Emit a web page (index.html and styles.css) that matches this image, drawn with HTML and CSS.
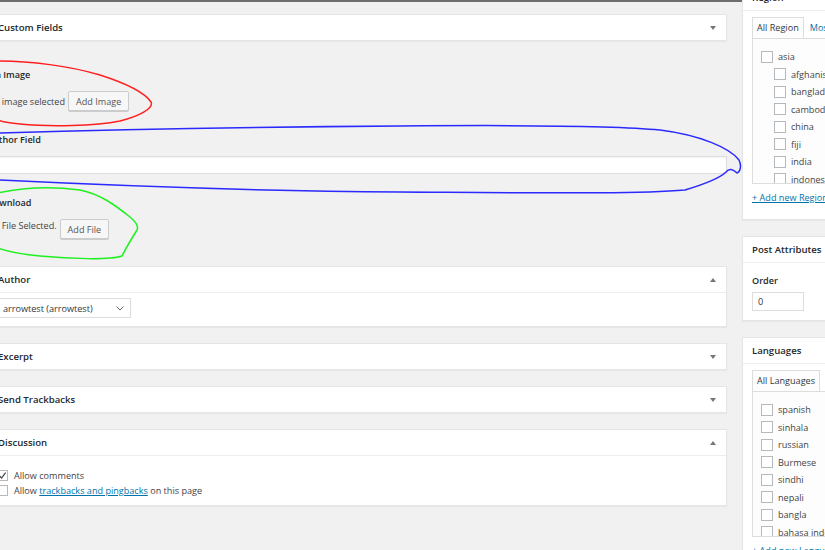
FILE: index.html
```html
<!DOCTYPE html>
<html lang="en">
<head>
<meta charset="utf-8">
<title>Edit Post</title>
<link rel="stylesheet" href="styles.css">
</head>
<body>
<div class="layout">
  <main class="main-col">
    <section class="cf">
      <header class="pb-head cf-head"><h2>Custom Fields</h2><span class="toggle down"></span></header>
      <div class="cf-body">
        <div class="field">
          <label class="field-label">Pin Image</label>
          <div class="field-row">
            <span>No image selected</span>
            <button class="btn">Add Image</button>
          </div>
        </div>
        <div class="field">
          <label class="field-label">Author Field</label>
          <div class="text-input"></div>
        </div>
        <div class="field">
          <label class="field-label">Download</label>
          <div class="field-row top">
            <span class="row-text">No File Selected.</span>
            <button class="btn">Add File</button>
          </div>
        </div>
      </div>
    </section>

    <section class="postbox">
      <header class="pb-head"><h2>Author</h2><span class="toggle up"></span></header>
      <div class="pb-body author-body">
        <div class="select">
          <span>arrowtest (arrowtest)</span>
          <svg class="chev" width="8" height="5" viewBox="0 0 8 5"><path d="M0.5 0.5 L4 4 L7.5 0.5" fill="none" stroke="#666" stroke-width="1"/></svg>
        </div>
      </div>
    </section>

    <section class="postbox">
      <header class="pb-head"><h2>Excerpt</h2><span class="toggle down"></span></header>
    </section>

    <section class="postbox">
      <header class="pb-head"><h2>Send Trackbacks</h2><span class="toggle down"></span></header>
    </section>

    <section class="postbox">
      <header class="pb-head"><h2>Discussion</h2><span class="toggle up"></span></header>
      <div class="pb-body disc-body">
        <div class="check-row">
          <span class="cb checked"><svg width="9" height="9" viewBox="0 0 9 9"><path d="M1.5 4.8 L3.6 7 L7.6 1.6" fill="none" stroke="#444" stroke-width="1.2"/></svg></span>
          <span>Allow comments</span>
        </div>
        <div class="check-row">
          <span class="cb"></span>
          <span>Allow <a href="#" class="link">trackbacks and pingbacks</a> on this page</span>
        </div>
      </div>
    </section>
  </main>

  <aside class="side-col">
    <section class="postbox side-box">
      <header class="pb-head"><h2>Region</h2></header>
      <div class="pb-body tax-body">
        <div class="tabs">
          <span class="tab active">All Region</span>
          <span class="tab">Most Used</span>
        </div>
        <div class="tab-panel">
          <ul class="terms">
            <li><span class="cb"></span>asia</li>
            <li class="child"><span class="cb"></span>afghanistan</li>
            <li class="child"><span class="cb"></span>bangladesh</li>
            <li class="child"><span class="cb"></span>cambodia</li>
            <li class="child"><span class="cb"></span>china</li>
            <li class="child"><span class="cb"></span>fiji</li>
            <li class="child"><span class="cb"></span>india</li>
            <li class="child"><span class="cb"></span>indonesia</li>
          </ul>
        </div>
        <a href="#" class="link add-new">+ Add new Region</a>
      </div>
    </section>

    <section class="postbox side-box">
      <header class="pb-head"><h2>Post Attributes</h2></header>
      <div class="pb-body attr-body">
        <div class="attr-label">Order</div>
        <div class="num-input">0</div>
      </div>
    </section>

    <section class="postbox side-box">
      <header class="pb-head"><h2>Languages</h2></header>
      <div class="pb-body tax-body">
        <div class="tabs">
          <span class="tab active">All Languages</span>
          <span class="tab">Most Used</span>
        </div>
        <div class="tab-panel">
          <ul class="terms">
            <li><span class="cb"></span>spanish</li>
            <li><span class="cb"></span>sinhala</li>
            <li><span class="cb"></span>russian</li>
            <li><span class="cb"></span>Burmese</li>
            <li><span class="cb"></span>sindhi</li>
            <li><span class="cb"></span>nepali</li>
            <li><span class="cb"></span>bangla</li>
            <li><span class="cb"></span>bahasa indonesia</li>
          </ul>
        </div>
        <a href="#" class="link add-new">+ Add new Language</a>
      </div>
    </section>
  </aside>
</div>

<svg class="annotations" width="825" height="550" viewBox="0 0 825 550">
  <path class="ann red" d="M -2 61 C 30 61, 70 66, 100 75 C 125 83, 145 93, 151 102 C 154 108, 140 116, 120 121 C 95 126, 50 127, 20 124 C 8 123, 0 121, -2 120"/>
  <path class="ann blue" d="M -2 133 C 100 130, 250 127, 400 126 C 520 125, 620 126, 660 130 C 700 135, 730 148, 739 160 C 742 166, 740 172, 737 173 C 733 169, 729 168, 726 172 C 720 178, 705 184, 685 190 C 640 194, 560 193, 400 192 C 250 191, 120 186, -2 180"/>
  <path class="ann green" d="M -2 193 C 20 188, 50 186, 80 190 C 100 194, 115 205, 130 217 C 136 222, 139 226, 137 230 C 132 238, 127 246, 122 256 C 110 260, 70 259, 40 256 C 20 254, 5 251, -2 248"/>
</svg>
</body>
</html>
```

FILE: styles.css
```css
* { box-sizing: border-box; }

html, body {
  margin: 0;
  height: 100%;
}

body {
  background: #f1f1f1;
  font-family: "Open Sans", "Noto Sans", sans-serif;
  font-size: 9.1px;
  color: #23282d;
  overflow: hidden;
  position: relative;
}

.layout {
  display: flex;
  gap: 15px;
  border-top: 2px solid #6e6e6e;
  margin-left: -13px;
  height: 100%;
}

.main-col {
  width: 740px;
  flex: none;
  padding-top: 12px;
}

.side-col {
  width: 202px;
  flex: none;
  margin-top: -18px;
}

/* generic postbox */
.postbox {
  background: #fff;
  border: 1px solid #e5e5e5;
  box-shadow: 0 1px 1px rgba(0, 0, 0, .04);
  margin-bottom: 16px;
}

.pb-head {
  height: 25px;
  display: flex;
  align-items: center;
  justify-content: space-between;
  padding: 0 10px;
}

.pb-head h2 {
  margin: 0;
  font-size: 9.6px;
  font-weight: 600;
  color: #23282d;
}

.pb-body {
  border-top: 1px solid #eee;
}

.toggle {
  width: 0;
  height: 0;
  border-left: 3.5px solid transparent;
  border-right: 3.5px solid transparent;
}
.toggle.down { border-top: 4px solid #72777c; }
.toggle.up { border-bottom: 4px solid #72777c; }

/* custom fields */
.cf {
  margin-bottom: 16px;
}

.cf-head {
  height: 27px;
  background: #fff;
  border: 1px solid #e5e5e5;
  box-shadow: 0 1px 1px rgba(0, 0, 0, .04);
}

.cf-body {
  padding: 15px 0 1px;
}

.field {
  padding: 12px 0 10px;
}

.field-label {
  display: block;
  font-weight: 600;
  line-height: 14px;
  margin-bottom: 9px;
}

.field-row {
  display: flex;
  align-items: center;
  gap: 3px;
  color: #444;
}
.field-row.top { align-items: flex-start; }
.row-text { line-height: 14px; }

.btn {
  height: 20px;
  padding: 0 7px;
  border: 1px solid #ccc;
  border-radius: 2px;
  background: #f7f7f7;
  box-shadow: 0 1px 0 #ccc;
  font: inherit;
  color: #555;
}

.text-input {
  height: 18px;
  background: #fff;
  border: 1px solid #ddd;
  box-shadow: inset 0 1px 2px rgba(0, 0, 0, .05);
}

/* author */
.author-body {
  padding: 5px 9px 8px;
}

.select {
  width: 134px;
  height: 20px;
  display: flex;
  align-items: center;
  justify-content: space-between;
  padding: 0 6px 0 5px;
  border: 1px solid #ddd;
  background: #fff;
  color: #32373c;
}

/* discussion */
.disc-body {
  padding: 12px 9px 7px;
}

.check-row {
  display: flex;
  align-items: center;
  height: 15px;
  color: #444;
}

.cb {
  width: 11px;
  height: 11px;
  flex: none;
  border: 1px solid #b4b9be;
  background: #fff;
  margin-right: 6px;
  display: flex;
  align-items: center;
  justify-content: center;
}

.link {
  color: #0073aa;
  text-decoration: underline;
}

/* sidebar */
.side-box .pb-head {
  padding-left: 9px;
}

.tax-body {
  padding: 6px 9px 15px;
}

.tabs {
  display: flex;
  gap: 2px;
  height: 21px;
}

.tab {
  line-height: 21px;
  padding: 0 4px;
  color: #0073aa;
}

.tab.active {
  color: #32373c;
  border: 1px solid #ddd;
  border-bottom: none;
  background: #fdfdfd;
  line-height: 20px;
}

.tab-panel {
  height: 146px;
  border: 1px solid #ddd;
  background: #fdfdfd;
  padding: 9px 8px;
  overflow: hidden;
}

.terms {
  list-style: none;
  margin: 0;
  padding: 0;
}

.terms li {
  height: 17.5px;
  display: flex;
  align-items: center;
  color: #444;
  white-space: nowrap;
}

.terms .cb {
  width: 12px;
  height: 12px;
  margin-right: 5px;
}

.terms li.child {
  padding-left: 13px;
}

.add-new {
  display: block;
  margin-top: 8px;
  line-height: 12px;
  white-space: nowrap;
}

.attr-body {
  padding: 12px 9px 9px;
}

.attr-label {
  font-weight: 600;
  line-height: 12px;
  margin-bottom: 5px;
}

.num-input {
  width: 52px;
  height: 19px;
  border: 1px solid #ddd;
  background: #fff;
  padding-left: 5px;
  line-height: 17px;
  color: #32373c;
}

/* hand-drawn annotations over the page */
.annotations {
  position: absolute;
  left: 0;
  top: 0;
  pointer-events: none;
}

.ann {
  fill: none;
  stroke-width: 1.5;
  stroke-linecap: round;
  stroke-linejoin: round;
}
.ann.red { stroke: #ff1f1f; }
.ann.blue { stroke: #2a2aff; }
.ann.green { stroke: #1ff01f; }
```
